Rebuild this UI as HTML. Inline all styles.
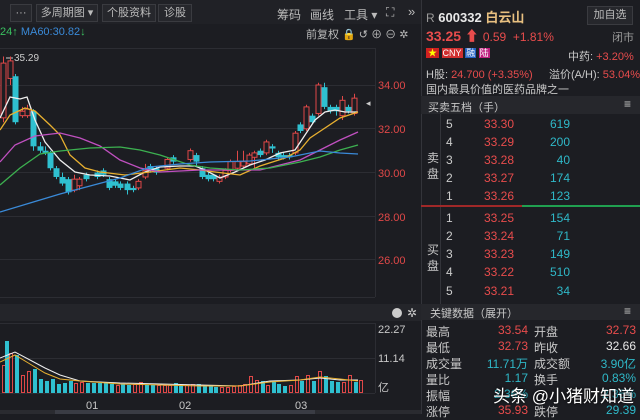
<!DOCTYPE html>
<html><head><meta charset="utf-8"><style>
body{margin:0;width:640px;height:414px;background:#1c1d22;overflow:hidden;font-family:"Liberation Sans","Noto Sans CJK SC",sans-serif;color:#c8c8c8;position:relative}
.a{position:absolute;white-space:nowrap}
.r{color:#e84c4c}.g{color:#2fb8c8}.w{color:#e8e8e8}.gr{color:#9a9a9a}
.btn{position:absolute;top:4px;height:16px;border:1px solid #3a3b40;background:#26272c;font-size:11px;line-height:16px;text-align:center;color:#bbb}
</style></head><body>
<div class="a" style="left:0;top:0;width:421px;height:24px;background:#202126"></div>
<div class="btn" style="left:10px;width:20px">···</div>
<div class="btn" style="left:36px;width:60px">多周期图 ▾</div>
<div class="btn" style="left:102px;width:52px">个股资料</div>
<div class="btn" style="left:158px;width:32px">诊股</div>
<div class="a" style="left:277px;top:6px;font-size:12px;color:#bbb">筹码</div>
<div class="a" style="left:310px;top:6px;font-size:12px;color:#bbb">画线</div>
<div class="a" style="left:344px;top:6px;font-size:12px;color:#bbb">工具 ▾</div>
<div class="a" style="left:386px;top:5px;font-size:12px;color:#bbb">⛶</div>
<div class="a" style="left:408px;top:4px;font-size:13px;color:#bbb">»</div>
<div class="a" style="left:0;top:26px;font-size:11px"><span style="color:#3ac060">24↑</span> <span style="color:#3a8ad8">MA60:30.82</span><span style="color:#3ac060">↓</span></div>
<div class="a" style="left:306px;top:26px;font-size:11px;color:#bbb">前复权 🔒 ↺ ⊕ ⊖ ✲</div>
<svg class="a" style="left:0;top:0" width="421" height="414" id="ch">
<g stroke="#2c2d33" stroke-width="1">
<line x1="0" y1="48.5" x2="375" y2="48.5"/><line x1="0" y1="85.5" x2="375" y2="85.5"/><line x1="0" y1="128.5" x2="375" y2="128.5"/><line x1="0" y1="172.5" x2="375" y2="172.5"/><line x1="0" y1="216.5" x2="375" y2="216.5"/><line x1="0" y1="259.5" x2="375" y2="259.5"/><line x1="0" y1="297.5" x2="375" y2="297.5"/><line x1="375.5" y1="48" x2="375.5" y2="297"/>
<line x1="0" y1="323.5" x2="375" y2="323.5"/><line x1="0" y1="358.5" x2="375" y2="358.5"/><line x1="0" y1="393.5" x2="375" y2="393.5"/><line x1="375.5" y1="323" x2="375.5" y2="393"/>
</g>
<rect x="0" y="304" width="421" height="17" fill="#24252a"/>
<g font-size="11" fill="#e04848"><text x="378" y="89">34.00</text><text x="378" y="133">32.00</text><text x="378" y="177">30.00</text><text x="378" y="221">28.00</text><text x="378" y="264">26.00</text></g>
<g font-size="11" fill="#c8c8c8"><text x="378" y="333">22.27</text><text x="378" y="362">11.14</text><text x="378" y="391">亿</text><text x="86" y="409">01</text><text x="179" y="409">02</text><text x="295" y="409">03</text></g>
<text x="14" y="61" font-size="10" fill="#ccc">35.29</text><line x1="6" y1="58" x2="13" y2="58" stroke="#ccc"/>
<text x="366" y="106" font-size="9" fill="#ccc">◂</text>
<circle cx="397" cy="313" r="5" fill="#ccc"/><text x="407" y="317" font-size="12" fill="#ccc">✲</text>
<rect x="0" y="410" width="421" height="4" fill="#2a2b30"/><rect x="55" y="410" width="260" height="4" fill="#3a3c44"/>
<g id="c"></g>
<g fill="none" stroke-width="1.3">
<polyline stroke="#eee" points="0,118 10,97 20,99 27,97 35,120 45,142 60,160 75,172 90,175 110,176 130,180 145,172 160,167 180,166 195,166 205,170 220,178 235,172 250,165 265,160 280,153 295,150 305,135 315,120 325,112 335,110 345,112 358,112"/>
<polyline stroke="#e8b030" points="0,130 10,115 25,108 35,111 50,125 60,135 70,155 85,168 100,172 125,175 150,172 180,168 200,170 215,172 240,175 260,166 285,158 300,150 310,138 325,128 340,118 358,112"/>
<polyline stroke="#c050c0" points="0,162 15,145 35,136 60,133 80,138 100,146 120,160 140,168 160,172 200,170 230,170 260,170 280,165 300,160 320,150 340,140 358,132"/>
<polyline stroke="#3cb050" points="0,185 20,168 40,154 60,151 90,148 120,147 140,150 160,155 190,165 210,168 240,170 270,168 300,162 320,157 340,150 358,145"/>
<polyline stroke="#3a8ad8" points="0,212 30,203 60,194 90,186 120,178 150,167 180,164 210,162 250,161 290,157 320,151 340,153 358,154"/>
<polyline stroke="#eee" stroke-width="1" points="0,358 15,352 30,360 45,368 60,375 80,381 120,383 200,385 240,386 270,381 300,380 320,378 340,380 358,380"/>
<polyline stroke="#e8b030" stroke-width="1" points="0,362 15,355 30,364 45,373 60,379 80,381 120,384 200,386 240,386 270,382 300,380 320,377 340,379 358,381"/>
</g>
</svg>
<!-- right panel -->
<div class="a" style="left:421px;top:0;width:1px;height:414px;background:#33343a"></div>
<div class="a" style="left:426px;top:7px;font-size:13px"><span class="gr" style="font-size:12px">R</span> <b class="w">600332</b> <b style="color:#e8c080">白云山</b></div>
<div class="btn" style="left:587px;top:6px;width:44px;height:17px">加自选</div>
<div class="a r" style="left:426px;top:26px;font-size:14px"><b>33.25</b> ⬆ <span style="font-size:12px">0.59 &nbsp;+1.81%</span></div>
<div class="a gr" style="left:612px;top:29px;font-size:11px">闭市</div>
<div class="a" style="left:426px;top:47px;font-size:9px;line-height:13px"><span style="background:#d02020;color:#ff0;padding:0 2px">★</span> <span style="background:#d03030;color:#fff;padding:0 1px">CNY</span> <span style="background:#2060c0;color:#fff;padding:0 1px">融</span> <span style="background:#c02080;color:#fff;padding:0 1px">陆</span></div>
<div class="a" style="left:568px;top:48px;font-size:11px">中药: <span class="r">+3.20%</span></div>
<div class="a" style="left:426px;top:66px;font-size:11px">H股: <span class="r">24.700 (+3.35%)</span></div>
<div class="a" style="left:549px;top:66px;font-size:11px">溢价(A/H): <span class="r">53.04%</span></div>
<div class="a" style="left:426px;top:81px;font-size:11px">国内最具价值的医药品牌之一</div>
<div class="a" style="left:421px;top:96px;width:219px;height:18px;background:#26272c"></div>
<div class="a" style="left:428px;top:99px;font-size:11px">买卖五档（手）</div>
<div class="a" style="left:624px;top:97px;font-size:12px">≡</div>
<div class="a" style="left:440px;top:114px;width:1px;height:190px;background:#33343a"></div>
<div class="a" style="left:427px;top:150px;font-size:12px;line-height:16px">卖<br>盘</div>
<div class="a" style="left:427px;top:242px;font-size:12px;line-height:16px">买<br>盘</div>
<div class="a" style="left:421px;top:205px;width:101px;height:2px;background:#a02828"></div>
<div class="a" style="left:522px;top:205px;width:118px;height:2px;background:#20a050"></div>
<div id="ob"></div>
<div class="a" style="left:421px;top:304px;width:219px;height:16px;background:#26272c"></div>
<div class="a" style="left:430px;top:305px;font-size:11px">关键数据（展开）</div>
<div class="a" style="left:624px;top:304px;font-size:12px">≡</div>
<div id="kd"></div>
<div class="a" style="left:493px;top:382px;font-size:17px;color:#fff;text-shadow:0 0 3px #000">头条 @小猪财知道</div>
<script>
var c=[[3,32.5,35,35.3,32.3],[10,34.3,35.1,35.3,34],[15,34.4,32.3,34.5,32.2],[22,32.6,32.8,33,32.5],[27,32.6,32.9,33.1,32.5],[33,32.8,31.2,32.9,31],[40,31.2,31,31.4,30.9],[45,31,30.9,31.2,30.8],[50,30.9,30.2,31,30.1],[56,30.2,29.8,30.3,29.7],[62,29.8,29.5,30,29.4],[68,29.7,29.1,29.8,29],[74,29.2,29.7,29.9,29.1],[79,29.4,29.7,29.8,29.2],[86,29.9,29.7,30,29.6],[97,30,29.8,30.1,29.7],[103,30.1,29.9,30.2,29.8],[109,29.7,29.3,29.8,29.2],[115,29.6,29.4,29.7,29.3],[120,29.5,29.3,29.6,29.2],[127,29.5,29.2,29.6,29],[133,29.3,29.2,29.4,29.1],[138,29.3,29.6,29.7,29.2],[145,29.8,30.1,30.4,29.7],[150,30.3,30.1,30.4,30],[156,30.2,30,30.3,29.9],[167,30.2,30.6,30.7,30.1],[173,30.7,30.5,30.8,30.4],[190,30.6,31,31.1,30.5],[196,30.8,30.5,30.9,30.3],[202,30.2,29.8,30.3,29.7],[208,29.9,29.7,30,29.6],[213,29.9,29.7,29.9,29.6],[219,29.6,29.8,29.9,29.5],[225,29.8,30.1,30.2,29.7],[230,30.1,30.5,30.6,30],[237,30.2,30.5,31,30.1],[243,30.3,30.5,31,30.2],[249,30.4,30.8,30.9,30.3],[254,30.7,30.9,31,30.2],[260,31,30.8,31.1,30.7],[266,30.9,31.4,31.5,30.8],[272,31.2,31.1,31.3,30.9],[278,30.9,30.7,31,30.6],[283,30.8,30.7,30.9,30.6],[289,30.8,30.7,30.9,30.6],[295,30.9,31.8,31.9,30.8],[300,32.2,31.9,32.3,31.8],[306,32,33,33.1,31.9],[312,32.6,32.3,32.7,32.2],[318,32.7,34,34.1,32.6],[324,33.9,33,34.1,32.9],[330,33,32.8,33.1,32.7],[336,33,32.8,33.1,32.6],[342,32.6,33.3,33.5,32.4],[348,33,32.8,33.1,32.7],[354,32.7,33.4,33.6,32.6]];
var Y=p=>85+(34-p)*21.9,s='';
c.forEach(function(d){var x=d[0],up=d[2]>=d[1],col=up?'#e04848':'#2fc0d0',t=Y(Math.max(d[1],d[2])),b=Y(Math.min(d[1],d[2]));if(b-t<1)b=t+1;
s+='<line x1="'+(x+.5)+'" y1="'+Y(d[3])+'" x2="'+(x+.5)+'" y2="'+Y(d[4])+'" stroke="'+col+'"/>';
s+=up?'<rect x="'+(x-2)+'" y="'+t+'" width="5" height="'+(b-t)+'" fill="#1c1d22" stroke="'+col+'"/>':'<rect x="'+(x-2.5)+'" y="'+t+'" width="6" height="'+(b-t)+'" fill="'+col+'"/>';});
var v=[[2,0,28,1],[5,1,52,0],[9,0,40,1],[15,1,38,0],[21,0,18,1],[27,0,22,1],[33,1,24,0],[39,1,14,0],[45,1,12,0],[51,1,14,0],[57,1,9,0],[63,1,10,0],[69,1,12,0],[74,0,10,1],[80,0,11,1],[86,1,10,0],[92,1,10,0],[98,1,10,0],[104,1,10,0],[110,1,9,0],[116,0,8,1],[121,1,9,0],[127,1,8,0],[133,0,9,1],[139,0,11,1],[145,1,8,0],[151,1,8,0],[157,0,8,1],[163,0,8,1],[168,0,8,1],[174,1,10,0],[179,1,8,0],[185,0,8,1],[191,0,9,1],[197,1,9,0],[203,1,8,0],[209,1,7,0],[214,1,6,0],[220,0,6,1],[226,0,6,1],[232,0,7,1],[238,0,8,1],[243,0,9,1],[249,0,17,1],[255,0,13,1],[261,1,12,0],[266,0,8,1],[272,1,12,0],[277,1,9,0],[283,1,7,0],[289,0,8,1],[295,0,17,1],[300,1,12,0],[306,0,18,1],[312,1,12,0],[318,0,22,1],[324,1,17,0],[330,1,12,0],[336,1,11,0],[342,0,11,1],[348,0,18,1],[354,1,11,0],[359,0,13,1]];
v.forEach(function(d){var col=d[1]?'#2fc0d0':'#e04848',y=393-d[2];s+=d[1]?'<rect x="'+d[0]+'" y="'+y+'" width="4" height="'+d[2]+'" fill="'+col+'"/>':'<rect x="'+(d[0]+.5)+'" y="'+(y+.5)+'" width="3" height="'+(d[2]-1)+'" fill="none" stroke="'+col+'"/>';});
document.getElementById('c').innerHTML=s;
var ob=[['5','33.30','619',117],['4','33.29','200',135],['3','33.28','40',153],['2','33.27','174',171],['1','33.26','123',189],['1','33.25','154',211],['2','33.24','71',229],['3','33.23','149',247],['4','33.22','510',265],['5','33.21','34',284]],h='';
ob.forEach(function(o){h+='<div class="a w" style="left:446px;top:'+o[3]+'px;font-size:12px;color:#ccc">'+o[0]+'</div><div class="a r" style="left:484px;top:'+o[3]+'px;font-size:12px">'+o[1]+'</div><div class="a g" style="left:530px;width:40px;text-align:right;top:'+o[3]+'px;font-size:12px">'+o[2]+'</div>';});
document.getElementById('ob').innerHTML=h;
var kd=[['最高','33.54','r','开盘','32.73','r'],['最低','32.73','r','昨收','32.66','w'],['成交量','11.71万','g','成交额','3.90亿','g'],['量比','1.17','g','换手','0.83%','g'],['振幅','2.36%','g','','2.36%','g'],['涨停','35.93','r','跌停','29.39','g']];h='';
kd.forEach(function(k,i){var t=323+i*16;h+='<div class="a" style="left:426px;top:'+t+'px;font-size:12px">'+k[0]+'</div><div class="a '+k[2]+'" style="left:480px;width:48px;text-align:right;top:'+t+'px;font-size:12px">'+k[1]+'</div><div class="a" style="left:534px;top:'+t+'px;font-size:12px">'+k[3]+'</div><div class="a '+k[5]+'" style="left:580px;width:56px;text-align:right;top:'+t+'px;font-size:12px">'+k[4]+'</div>';});
document.getElementById('kd').innerHTML=h;
</script>
</body></html>
